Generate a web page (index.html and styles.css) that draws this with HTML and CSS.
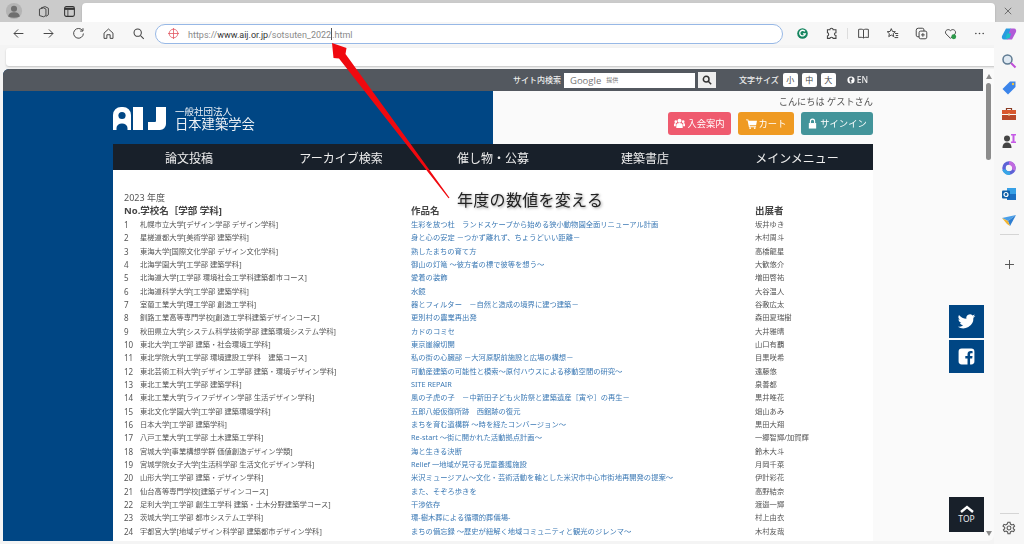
FILE: index.html
```html
<!DOCTYPE html>
<html lang="ja">

<head>
  <meta charset="utf-8" />
  <title>日本建築学会 卒業設計展</title>
  <link rel="stylesheet" href="styles.css">
</head>

<body>
  <div class="tabbar">
    <svg class="avatar" viewBox="0 0 20 20"><circle cx="10" cy="10" r="9" fill="#b4b4b4"/><circle cx="10" cy="7.5" r="3.4" fill="#6f6f6f"/><path d="M3.5 16c1-4 3.5-4.5 6.5-4.5s5.500.5 6.500 4.500q-6.500 3-13 0z" fill="#6f6f6f"/></svg>
    <svg class="tab-icon" viewBox="0 0 16 16" fill="none" stroke="#444" stroke-width="1.200"><path d="M5 3.500 10 2l4 2v8l-3 2"/><path d="M3 5l5-1.500 3 1.500v8l-3 1.500-5-1.500z"/></svg>
    <svg class="tab-icon" viewBox="0 0 16 16"><rect x="2" y="2" width="12" height="12" rx="2" fill="none" stroke="#333" stroke-width="1.300"/><path d="M2 3.500h12V6H2z" fill="#333"/><path d="M6 6v8" stroke="#333"/></svg>
    <div class="tab-blank"></div>
    <svg class="close-x" viewBox="0 0 10 10" stroke="#555" stroke-width="1"><path d="M1 1l8 8M9 1l-8 8"/></svg>
  </div>

  <div class="toolbar">
    <div class="nav-icons">
      <svg viewBox="0 0 16 16" fill="none" stroke="#444" stroke-width="1.200"><path d="M14 8H2.500M7.500 3l-5 5 5 5"/></svg>
      <svg viewBox="0 0 16 16" fill="none" stroke="#444" stroke-width="1.200"><path d="M2 8h11.500M8.500 3l5 5-5 5"/></svg>
      <svg viewBox="0 0 16 16" fill="none" stroke="#444" stroke-width="1.200"><path d="M13 4.500A6 6 0 1 0 14 8"/><path d="M13.500 1.500v3.500H10"/></svg>
      <svg viewBox="0 0 16 16" fill="none" stroke="#444" stroke-width="1.200"><path d="M2.500 7.500 8 2.500l5.500 5V14h-3.500V9.500H6V14H2.500z"/></svg>
      <svg viewBox="0 0 16 16" fill="none" stroke="#444" stroke-width="1.300"><circle cx="7" cy="7" r="4.500"/><path d="M10.500 10.500l4 4"/></svg>
    </div>
    <div class="address">
      <svg class="site-icon" viewBox="0 0 14 14" fill="none" stroke="#e2555f" stroke-width="1"><circle cx="7" cy="7" r="5.500"/><path d="M7 0v14M0 7h14"/></svg>
      <span class="url">https://<b>www.aij.or.jp</b>/sotsuten_2022<i class="caret"></i>.html</span>
    </div>
    <div class="ext-icons">
      <svg viewBox="0 0 16 16"><circle cx="8" cy="8" r="6.500" fill="#15855f"/><path d="M11 5.500A3.500 3.500 0 1 0 11.500 8.500H8.500" fill="none" stroke="#fff" stroke-width="1.600"/></svg>
      <svg viewBox="0 0 16 16" fill="none" stroke="#444" stroke-width="1.300"><path d="M6 3.500c0-2.500 4-2.500 4 0h3.500V7c-2.500 0-2.500 3.500 0 3.500V14H10c0-2-4-2-4 0H3v-3c2 0 2-4 0-4V3.500z"/></svg>
      <i class="ext-sep"></i>
      <svg viewBox="0 0 16 16" fill="none" stroke="#444" stroke-width="1.200"><path d="M8 3.500C6.500 2.500 4 2.500 2 3v10c2-.5 4.500-.5 6 .5 1.500-1 4-1 6-.5V3c-2-.5-4.500-.5-6 .5zM8 3.500v10"/></svg>
      <svg viewBox="0 0 16 16" fill="none" stroke="#444" stroke-width="1.200"><path d="M6.500 2l1.500 3.500 3.500.3-2.700 2.400.8 3.600-3.100-1.900-3.100 1.900.8-3.600L1.500 5.800l3.500-.3z"/><path d="M11 8h4M12 10.500h3M10.500 13H15"/></svg>
      <svg viewBox="0 0 16 16" fill="none" stroke="#444" stroke-width="1.200"><rect x="5" y="5" width="9.500" height="9.500" rx="2"/><path d="M9.700 7.500v4.500M7.500 9.700h4.500M5 12H3.500A2 2 0 0 1 1.500 10V4a2.500 2.500 0 0 1 2.500-2.500h5A2 2 0 0 1 11 3.500V5"/></svg>
      <svg viewBox="0 0 16 16"><path d="M8 14 2.500 8.500C0 5.500 4.500 1 8 4.500 11.500 1 16 5.500 13.500 8.500z" fill="none" stroke="#444" stroke-width="1.200"/><circle cx="12" cy="12" r="3" fill="#2c9a4a"/></svg>
      <svg viewBox="0 0 16 16" fill="#444"><circle cx="3.500" cy="8" r="1"/><circle cx="8" cy="8" r="1"/><circle cx="12.500" cy="8" r="1"/></svg>
      <svg class="copilot" viewBox="0 0 16 16"><path d="M5 2.500h5L6.500 13.500H3C1 13.500.5 11.500 1 10z" fill="#2a9be0"/><path d="M11 13.500H6l3.500-11H13c2 0 2.500 2 2 3.500z" fill="#b25ad8"/><path d="M6 7.500h4l-1.500 5H4.500z" fill="#1ec0c8"/></svg>
    </div>
  </div>

  <div class="browser-body">
    <div class="browser-main">
      <div class="fav-blank"></div>

      <div class="window">
        <div class="page">
          <div class="utility">
            <span class="util-label">サイト内検索</span>
            <div class="search-box"><span class="google">Google</span><span class="teikyo">提供</span></div>
            <div class="search-btn">
              <svg viewBox="0 0 12 12" fill="none" stroke="#333" stroke-width="1.800"><circle cx="5" cy="5" r="3.400"/><path d="M7.500 7.500 11 11"/></svg>
            </div>
            <span class="util-label size-label">文字サイズ</span>
            <span class="size-btn">小</span>
            <span class="size-btn">中</span>
            <span class="size-btn">大</span>
            <svg class="globe" viewBox="0 0 10 10"><circle cx="5" cy="5" r="4.500" fill="#fff"/><path d="M3 2.500l3-.5 1 2-2 1.500 1 2.500-2 .5-1-3z" fill="#53585f"/></svg>
            <span class="util-label lang">EN</span>
          </div>

          <header class="site-head">
            <div class="brand">
              <svg class="aij-logo" viewBox="0 0 53 23" fill="#fff"><path d="M0 23V8a8 8 0 0 1 8-8h2a8 8 0 0 1 8 8v15h-3.500v-2a5.500 4.500 0 0 0-11 0v2z"/><circle cx="9" cy="8.500" r="3.600" fill="#004684"/><path d="M20 0h10v23H20z"/><path d="M43 0h10v17a6 6 0 0 1-6 6H35v-8h7a1 1 0 0 0 1-1z"/></svg>
              <div class="brand-name">
                <span class="brand-sub">一般社団法人</span>
                <span class="brand-main">日本建築学会</span>
              </div>
            </div>
            <div class="head-user">
              <p class="greeting">こんにちは ゲストさん</p>
              <div class="head-btns">
                <a class="btn btn-join" href="#">
                  <svg viewBox="0 0 12 12" fill="#fff"><circle cx="6" cy="3" r="2.200"/><circle cx="2" cy="4" r="1.500"/><circle cx="10" cy="4" r="1.500"/><path d="M2.500 11V8q0-2.500 3.500-2.500T9.500 8v3zM0 9V7q0-1.500 2-1.500v3.500zM12 9V7q0-1.500-2-1.500v3.500z"/></svg>入会案内</a>
                <a class="btn btn-cart" href="#">
                  <svg viewBox="0 0 12 12" fill="#fff"><path d="M0 1.500h2.500l.4 1.500H12l-1 5H4l.2 1H11v1H3.200L1.700 2.500H0z"/><circle cx="4.500" cy="11" r="1"/><circle cx="9.500" cy="11" r="1"/></svg>カート</a>
                <a class="btn btn-sign" href="#">
                  <svg viewBox="0 0 12 12" fill="#fff"><path d="M2 5.500h8V11.500H2z"/><path d="M3.700 5.500V3.500a2.300 2.300 0 0 1 4.600 0v2" fill="none" stroke="#fff" stroke-width="1.200"/></svg>サインイン</a>
              </div>
            </div>
          </header>

          <nav class="main-nav">
            <a href="#">論文投稿</a>
            <a href="#">アーカイブ検索</a>
            <a href="#">催し物・公募</a>
            <a href="#">建築書店</a>
            <a href="#">メインメニュー</a>
          </nav>

          <main class="content">
            <p class="year">2023 年度</p>
            <table class="works">
              <colgroup><col class="c-no"><col class="c-school"><col class="c-title"><col></colgroup>
              <thead>
                <tr><th colspan="2">No.学校名［学部 学科]</th><th>作品名</th><th>出展者</th></tr>
              </thead>
              <tbody>
                <tr><td>1</td><td>札幌市立大学[デザイン学部 デザイン学科]</td><td><a href="#">生彩を放つ杜　ランドスケープから始める狭小動物園全面リニューアル計画</a></td><td>坂井ゆき</td></tr>
                <tr><td>2</td><td>星槎道都大学[美術学部 建築学科]</td><td><a href="#">身と心の安定 －つかず離れず、ちょうどいい距離－</a></td><td>木村周斗</td></tr>
                <tr><td>3</td><td>東海大学[国際文化学部 デザイン文化学科]</td><td><a href="#">熟したまちの育て方</a></td><td>高橋龍星</td></tr>
                <tr><td>4</td><td>北海学園大学[工学部 建築学科]</td><td><a href="#">御山の灯篭 ～彼方者の標で彼等を想う～</a></td><td>大歓悠介</td></tr>
                <tr><td>5</td><td>北海道大学[工学部 環境社会工学科建築都市コース]</td><td><a href="#">愛着の装飾</a></td><td>増田啓祐</td></tr>
                <tr><td>6</td><td>北海道科学大学[工学部 建築学科]</td><td><a href="#">水鏡</a></td><td>大谷温人</td></tr>
                <tr><td>7</td><td>室蘭工業大学[理工学部 創造工学科]</td><td><a href="#">器とフィルター　－自然と造成の境界に建つ建築－</a></td><td>谷敷広太</td></tr>
                <tr><td>8</td><td>釧路工業高等専門学校[創造工学科建築デザインコース]</td><td><a href="#">更別村の農業再出発</a></td><td>森田夏瑞樹</td></tr>
                <tr><td>9</td><td>秋田県立大学[システム科学技術学部 建築環境システム学科]</td><td><a href="#">カドのコミセ</a></td><td>大井雅晴</td></tr>
                <tr><td>10</td><td>東北大学[工学部 建築・社会環境工学科]</td><td><a href="#">東京崖線切開</a></td><td>山口有覇</td></tr>
                <tr><td>11</td><td>東北学院大学[工学部 環境建設工学科　建築コース]</td><td><a href="#">私の街の心臓部 －大河原駅前施設と広場の構想－</a></td><td>目黒咲希</td></tr>
                <tr><td>12</td><td>東北芸術工科大学[デザイン工学部 建築・環境デザイン学科]</td><td><a href="#">可動産建築の可能性と模索～原付ハウスによる移動空間の研究～</a></td><td>遠藤悠</td></tr>
                <tr><td>13</td><td>東北工業大学[工学部 建築学科]</td><td><a href="#">SITE REPAIR</a></td><td>泉善都</td></tr>
                <tr><td>14</td><td>東北工業大学[ライフデザイン学部 生活デザイン学科]</td><td><a href="#">風の子虎の子　－中新田子ども火防祭と建築遺産［寅や］の再生－</a></td><td>黒井唯花</td></tr>
                <tr><td>15</td><td>東北文化学園大学[工学部 建築環境学科]</td><td><a href="#">五郎八姫仮御所跡　西館跡の復元</a></td><td>畑山あみ</td></tr>
                <tr><td>16</td><td>日本大学[工学部 建築学科]</td><td><a href="#">まちを育む遺構群 ～時を経たコンバージョン～</a></td><td>黒田大翔</td></tr>
                <tr><td>17</td><td>八戸工業大学[工学部 土木建築工学科]</td><td><a href="#">Re-start ～街に開かれた活動拠点計画～</a></td><td>一郷智輝/加賀輝</td></tr>
                <tr><td>18</td><td>宮城大学[事業構想学群 価値創造デザイン学類]</td><td><a href="#">海と生きる決断</a></td><td>鈴木大斗</td></tr>
                <tr><td>19</td><td>宮城学院女子大学[生活科学部 生活文化デザイン学科]</td><td><a href="#">Relief 一地域が見守る児童養護施設</a></td><td>月岡千菜</td></tr>
                <tr><td>20</td><td>山形大学[工学部 建築・デザイン学科]</td><td><a href="#">米沢ミュージアム～文化・芸術活動を軸とした米沢市中心市街地再開発の提案～</a></td><td>伊計彩花</td></tr>
                <tr><td>21</td><td>仙台高等専門学校[建築デザインコース]</td><td><a href="#">また、そぞろ歩きを</a></td><td>高野結奈</td></tr>
                <tr><td>22</td><td>足利大学[工学部 創生工学科 建築・土木分野建築学コース]</td><td><a href="#">干渉依存</a></td><td>渡邉一輝</td></tr>
                <tr><td>23</td><td>茨城大学[工学部 都市システム工学科]</td><td><a href="#">環-樹木葬による循環的葬儀場-</a></td><td>村上由衣</td></tr>
                <tr><td>24</td><td>宇都宮大学[地域デザイン科学部 建築都市デザイン学科]</td><td><a href="#">まちの備忘録 ～歴史が紐解く地域コミュニティと観光のジレンマ～</a></td><td>木村友哉</td></tr>
              </tbody>
            </table>
          </main>

          <div class="social">
            <a href="#"><svg viewBox="0 0 24 24" fill="#fff"><path d="M23 5a9 9 0 0 1-2.600.7 4.500 4.500 0 0 0 2-2.500 9 9 0 0 1-2.800 1.100 4.500 4.500 0 0 0-7.700 4.100A12.800 12.800 0 0 1 2.500 3.700a4.500 4.500 0 0 0 1.400 6 4.500 4.500 0 0 1-2-.6c0 2.200 1.500 4 3.600 4.500a4.500 4.500 0 0 1-2 .1 4.500 4.500 0 0 0 4.200 3.100A9 9 0 0 1 1 18.700 12.800 12.800 0 0 0 20.700 7.300 9 9 0 0 0 23 5z"/></svg></a>
            <a href="#"><svg viewBox="0 0 24 24" fill="#fff"><path d="M6 2h12a4 4 0 0 1 4 4v12a4 4 0 0 1-4 4h-1.500v-7.500h2.700l.4-3h-3.100V9.500c0-.9.300-1.500 1.500-1.500h1.700V5.300c-.3 0-1.300-.1-2.400-.1-2.400 0-4 1.400-4 4.100v2.200h-2.800v3h2.800V22H6a4 4 0 0 1-4-4V6a4 4 0 0 1 4-4z"/></svg></a>
          </div>
          <a class="to-top" href="#">
            <svg viewBox="0 0 14 8" fill="none" stroke="#fff" stroke-width="2.400"><path d="M1 7l6-5 6 5"/></svg>
            TOP
          </a>
        </div>

        <div class="scrollbar">
          <i class="arrow-up"></i>
          <i class="thumb"></i>
          <i class="arrow-down"></i>
        </div>
      </div>
    </div>

    <aside class="rail">
      <svg viewBox="0 0 16 16" fill="none"><circle cx="6.500" cy="6.500" r="4.500" fill="#dfe9f2" stroke="#5e7a92" stroke-width="1.500"/><path d="M10 10l4.500 4.500" stroke="#c04fd8" stroke-width="2"/></svg>
      <svg viewBox="0 0 16 16"><path d="M9 1.500h5.500V7L7 14.500 1.500 9z" fill="#3b84ea"/><circle cx="12" cy="4" r="1.200" fill="#f2c23e"/></svg>
      <svg viewBox="0 0 16 16"><path d="M5.500 4V2.500h5V4" fill="none" stroke="#8a3a22" stroke-width="1.200"/><path d="M1 4h14v4H1z" fill="#d8582e"/><path d="M1 9h14v5H1z" fill="#b9492a"/><path d="M7 7.500h2v2H7z" fill="#f4d9a8"/></svg>
      <svg viewBox="0 0 16 16"><circle cx="6" cy="5.500" r="3" fill="#444"/><path d="M1.500 15c0-4 2-5.500 4.500-5.500s4.500 1.500 4.500 5.500z" fill="#444"/><path d="M10 1h5v1.500h-1.500v6H15V10h-5V8.500h1.500v-6H10z" fill="#c65be6"/></svg>
      <svg viewBox="0 0 16 16" fill="none"><circle cx="8" cy="8" r="5" stroke="#5d62d6" stroke-width="3.500"/><path d="M8 3a5 5 0 0 1 4.500 7" stroke="#c26ae0" stroke-width="3.500"/><path d="M3 9.500A5 5 0 0 0 9 13" stroke="#38a6e6" stroke-width="3.500"/></svg>
      <svg viewBox="0 0 16 16"><path d="M6 2h9v12H6z" fill="#37a0e6"/><path d="M6 8h9v6H6z" fill="#1b6fc2"/><rect x="1" y="4.500" width="8" height="8" rx="1" fill="#0f5ea8"/><circle cx="5" cy="8.500" r="2" fill="none" stroke="#fff" stroke-width="1.200"/></svg>
      <svg viewBox="0 0 16 16"><path d="M1 5l14-3-8 6z" fill="#4a9fe8"/><path d="M15 2 9 13 7 8z" fill="#2e7ed1"/><path d="M1 5l6 3 2 5-3-2z" fill="#f2b431"/></svg>
      <i class="rail-sep"></i>
      <svg class="rail-plus" viewBox="0 0 16 16" stroke="#555" stroke-width="1.200"><path d="M8 2.500v11M2.500 8h11"/></svg>
      <i class="rail-sep rail-sep-low"></i>
      <svg class="rail-gear" viewBox="0 0 16 16" fill="none" stroke="#555" stroke-width="1.200"><circle cx="8" cy="8" r="2.200"/><path d="M6.800 1.500h2.400l.4 2 1.700 1 1.900-.7 1.200 2.100-1.500 1.300v1.600l1.500 1.300-1.200 2.100-1.900-.7-1.700 1-.4 2H6.800l-.4-2-1.700-1-1.900.7-1.200-2.100 1.500-1.300V7.200L1.100 5.900l1.200-2.100 1.900.7 1.700-1z"/></svg>
    </aside>
  </div>

  <!-- annotation drawn on top of the screenshot -->
  <svg class="callout-arrow" viewBox="0 0 1024 544">
    <path d="M332 43 L346.500 48 L345.500 54 L449.500 197.700 L448.500 198.300 L339 58.500 L333.500 58 Z" fill="#f0090f"/>
  </svg>
  <p class="callout">年度の数値を変える</p>
</body>

</html>
```

FILE: styles.css
```css
* {
  margin: 0;
  padding: 0;
  box-sizing: border-box;
}

html,
body {
  height: 544px;
  overflow: hidden;
}

body {
  position: relative;
  display: flex;
  flex-direction: column;
  background: #f4f4f4;
  font: 8px/1.4 'Noto Sans', 'Noto Sans CJK JP', sans-serif;
  color: #555;
  filter: blur(.3px);
}

a {
  color: inherit;
  text-decoration: none;
}

i {
  font-style: normal;
}

/* browser chrome */
.tabbar {
  display: flex;
  align-items: center;
  height: 22px;
  padding: 3px 0 0 5px;
  background: #cbcbcb;
}
.avatar {
  width: 18px;
  height: 18px;
  margin-top: -3px;
}
.tab-icon {
  width: 13px;
  height: 13px;
  margin: -3px 0 0 14px;
}
.tab-icon + .tab-icon {
  margin-left: 13px;
}
.tab-blank {
  width: 913px;
  height: 19px;
  margin-left: 6px;
  background: #fff;
  border-radius: 4px 4px 0 0;
  box-shadow: 0 1px 2px rgba(0, 0, 0, .2);
}
.close-x {
  width: 8px;
  height: 8px;
  margin: -3px 0 0 9px;
}

.toolbar {
  display: flex;
  align-items: center;
  height: 23px;
  background: #f7f7f7;
}
.nav-icons {
  flex: none;
  display: flex;
  gap: 17px;
  width: 155px;
  padding-left: 12px;
}
.nav-icons svg {
  width: 13px;
  height: 13px;
}
.address {
  flex: none;
  display: flex;
  align-items: center;
  width: 628px;
  height: 20px;
  padding-left: 12px;
  background: #fff;
  border: 1.500px solid #97b8e6;
  border-radius: 10px;
}
.site-icon {
  width: 11px;
  height: 11px;
}
.url {
  margin-left: 9px;
  font: 9px Roboto, sans-serif;
  color: #8a8a8a;
}
.url b {
  font-weight: 400;
  color: #333;
}
.caret {
  display: inline-block;
  width: 1px;
  height: 12px;
  margin-bottom: -2px;
  background: #555;
}
.ext-icons {
  flex: none;
  display: flex;
  align-items: center;
  gap: 16px;
  padding-left: 13px;
}
.ext-icons svg {
  width: 13px;
  height: 13px;
}
.ext-icons .copilot {
  width: 16px;
  height: 16px;
  margin-left: -1px;
}
.ext-sep {
  width: 1px;
  height: 11px;
  margin: 0 -7px;
  background: #ddd;
}

.browser-body {
  flex: 1;
  display: flex;
  min-height: 0;
}
.browser-main {
  display: flex;
  flex-direction: column;
  width: 994px;
}
.fav-blank {
  height: 18px;
  margin: 3px -3px 0 6px;
  background: #fff;
  border-radius: 3px;
  box-shadow: 0 1px 2px rgba(0, 0, 0, .2);
}

.rail {
  display: flex;
  flex-direction: column;
  align-items: center;
  gap: 10.700px;
  width: 30px;
  padding-top: 8px;
  background: #f7f7f7;
}
.rail svg {
  flex: none;
  width: 16px;
  height: 16px;
}
.rail-sep {
  flex: none;
  width: 19px;
  height: 1px;
  margin-top: -6px;
  background: #d5d5d5;
}
.rail .rail-plus {
  width: 13px;
  height: 13px;
  margin-top: 12px;
}
.rail-sep-low {
  margin-top: 232px;
}
.rail .rail-gear {
  width: 14px;
  height: 14px;
  margin-top: -4px;
}

/* page area */
.window {
  display: flex;
  height: 472px;
  margin: 3px 0 0 3px;
  background: #fafafa;
  border-radius: 6px 0 6px 0;
  overflow: hidden;
}
.page {
  position: relative;
  width: 980px;
  background: linear-gradient(to right, #004684 110px, #fafafa 110px);
}
.scrollbar {
  position: relative;
  flex: 1;
  display: flex;
  flex-direction: column;
  align-items: center;
  padding-top: 5px;
}
.thumb {
  width: 5px;
  height: 77px;
  margin-top: 4px;
  background: #8c8c8c;
  border-radius: 3px;
}
.arrow-up,
.arrow-down {
  border-left: 3.500px solid transparent;
  border-right: 3.500px solid transparent;
}
.arrow-up {
  border-bottom: 5px solid #8c8c8c;
}
.arrow-down {
  margin-top: auto;
  margin-bottom: 5px;
  border-top: 5px solid #8c8c8c;
}

.utility {
  display: flex;
  align-items: center;
  height: 22px;
  padding-left: 510px;
  background: #53585f;
}
.util-label {
  font-size: 8px;
  font-weight: 500;
  color: #eee;
}
.search-box {
  display: flex;
  align-items: center;
  gap: 5px;
  width: 131px;
  height: 15px;
  margin-left: 3px;
  padding-left: 6px;
  background: #fff;
}
.google {
  font: 9.500px 'Open Sans', sans-serif;
  color: #777;
}
.teikyo {
  font-size: 6px;
  color: #777;
}
.search-btn {
  display: flex;
  align-items: center;
  justify-content: center;
  width: 18px;
  height: 16px;
  margin-left: 3px;
  background: #eee;
}
.search-btn svg {
  width: 10px;
  height: 10px;
}
.size-label {
  margin: 0 4px 0 23px;
}
.size-btn {
  display: flex;
  align-items: center;
  justify-content: center;
  width: 15px;
  height: 14px;
  margin-right: 4px;
  background: #fff;
  border-radius: 2px;
  font-size: 8px;
  color: #444;
}
.globe {
  width: 8px;
  height: 8px;
  margin: 0 2px 0 7px;
}
.lang {
  font-size: 8.500px;
}

.site-head {
  display: flex;
  height: 53px;
}
.brand {
  display: flex;
  align-items: center;
  gap: 9px;
  width: 490px;
  padding: 16px 0 14px 110px;
  background: #004684;
}
.aij-logo {
  flex: none;
  width: 53px;
  height: 23px;
}
.brand-name {
  display: flex;
  flex-direction: column;
  margin-top: 1px;
  color: #eef2f6;
}
.brand-sub {
  font-size: 9.500px;
  line-height: 10.500px;
}
.brand-main {
  font-size: 13.300px;
  line-height: 14.500px;
}
.head-user {
  flex: 1;
  padding: 4px 110px 0 0;
}
.greeting {
  text-align: right;
  font-size: 9.200px;
  line-height: 13px;
  color: #555;
}
.head-btns {
  display: flex;
  justify-content: flex-end;
  gap: 7px;
  margin-top: 4px;
}
.btn {
  display: flex;
  align-items: center;
  justify-content: center;
  gap: 2px;
  height: 23px;
  border-radius: 3px;
  font-size: 9.300px;
  color: #fff;
}
.btn svg {
  width: 11px;
  height: 11px;
}
.btn-join {
  width: 63px;
  background: #ef5a6e;
}
.btn-cart {
  width: 56px;
  background: #ef9a22;
}
.btn-sign {
  width: 72px;
  background: #43949a;
}

.main-nav {
  display: grid;
  grid-template-columns: repeat(5, 1fr);
  height: 26px;
  margin: 0 110px;
  padding-top: 4px;
  background: #18202a;
  text-align: center;
  font-size: 12px;
  line-height: 22px;
  color: #eee;
}

.content {
  height: 400px;
  margin: 0 110px;
  padding: 21px 11px 0;
  background: #fff;
}
.year {
  font-size: 9px;
  line-height: 13px;
  color: #555;
}
.works {
  width: 100%;
  border-collapse: collapse;
  table-layout: fixed;
}
.c-no {
  width: 16px;
}
.c-school {
  width: 271px;
}
.c-title {
  width: 344px;
}
.works th {
  height: 14px;
  padding: 0;
  text-align: left;
  font-size: 9.500px;
  font-weight: 700;
  color: #444;
}
.works td {
  height: 13.330px;
  padding: 0;
  font-size: 7.300px;
  line-height: 13.330px;
  white-space: nowrap;
  color: #555;
}
.works td:first-child {
  font-size: 8px;
}
.works a {
  color: #3d7ab5;
}

.social {
  position: absolute;
  right: -1px;
  top: 236px;
  display: flex;
  flex-direction: column;
  gap: 2px;
}
.social a {
  display: flex;
  align-items: center;
  justify-content: center;
  width: 35px;
  height: 33px;
  background: #004684;
}
.social svg {
  width: 19px;
  height: 19px;
}
.to-top {
  position: absolute;
  right: -1px;
  top: 428px;
  display: flex;
  flex-direction: column;
  align-items: center;
  justify-content: center;
  width: 35px;
  height: 35px;
  background: #18202a;
  font-size: 8.500px;
  line-height: 10px;
  color: #eee;
}
.to-top svg {
  width: 14px;
  height: 8px;
  margin-bottom: 1px;
}

/* annotation */
.callout-arrow {
  position: absolute;
  left: 0;
  top: 0;
  width: 1024px;
  height: 544px;
  pointer-events: none;
}
.callout {
  position: absolute;
  left: 457px;
  top: 188px;
  font-size: 16px;
  line-height: 24px;
  letter-spacing: .3px;
  color: #222;
  text-shadow: 1px 1px 3px rgba(0, 0, 0, .4);
}
```
